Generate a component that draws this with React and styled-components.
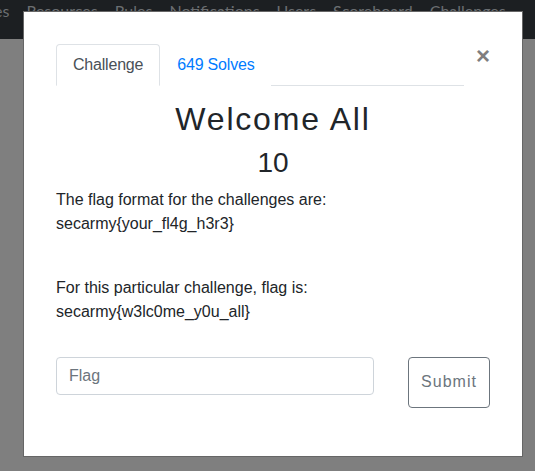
import React from 'react';
import styled, { createGlobalStyle } from 'styled-components';

const GlobalStyle = createGlobalStyle`
    html, body {
        margin: 0;
        padding: 0;
        background: #7f7f7f;
        font-family: "Liberation Sans", Arial, sans-serif;
        color: #212529;
    }
`;

const Page = styled.div`
    position: relative;
    width: 535px;
    height: 471px;
    overflow: hidden;
    background: #7f7f7f;
`;

const NavBar = styled.nav`
    height: 39px;
    background: #1c1f22;
    display: flex;
    gap: 17px;
    margin-left: -6px;
    overflow: hidden;
`;

const NavLink = styled.span`
    font-family: Lato, "Liberation Sans", sans-serif;
    font-size: 16px;
    line-height: 22px;
    color: #6b6e71;
    white-space: nowrap;
`;

const Overlay = styled.div`
    position: absolute;
    inset: 0;
    padding: 11px 0 0 23px;
`;

const Dialog = styled.div`
    box-sizing: border-box;
    width: 500px;
    height: 446px;
    background: #fff;
    border: 1px solid #666;
    padding: 32px;
`;

const Header = styled.div`
    display: flex;
    align-items: flex-start;
`;

const Tabs = styled.ul`
    flex: 1;
    display: flex;
    list-style: none;
    margin: 0;
    padding: 0;
    border-bottom: 1px solid #dee2e6;
`;

const Tab = styled.li`
    padding: 8px 16px;
    margin-bottom: -1px;
    font-size: 16px;
    line-height: 24px;
    letter-spacing: -0.2px;
    border: 1px solid ${p => (p.$active ? '#dee2e6' : 'transparent')};
    border-bottom-color: ${p => (p.$active ? '#fff' : 'transparent')};
    border-radius: 4px 4px 0 0;
    background: #fff;
    color: ${p => (p.$active ? '#495057' : '#007bff')};
`;

const Close = styled.button`
    margin: 0 0 0 12px;
    padding: 0;
    border: 0;
    background: none;
    font-family: "Liberation Sans", Arial, sans-serif;
    font-size: 24px;
    font-weight: 700;
    line-height: 24px;
    color: #7f7f7f;
    width: 14px;
`;

const Title = styled.h2`
    margin: 14px 0 8px;
    text-align: center;
    font-size: 32px;
    font-weight: 400;
    line-height: 1.2;
    letter-spacing: 1.8px;
`;

const Value = styled.h3`
    margin: 0 0 8px;
    text-align: center;
    font-size: 28px;
    font-weight: 400;
    line-height: 1.2;
`;

const Text = styled.p`
    margin: 0 0 ${p => p.$gap || 16}px;
    font-size: 16px;
    line-height: 24px;
`;

const SubmitRow = styled.form`
    display: flex;
    align-items: flex-start;
    margin-top: 33px;
`;

const FlagInput = styled.input`
    box-sizing: border-box;
    width: 318px;
    height: 38px;
    padding: 6px 12px;
    border: 1px solid #ced4da;
    border-radius: 4px;
    font-family: "Liberation Sans", Arial, sans-serif;
    font-size: 16px;
    color: #495057;
    outline: none;

    &::placeholder {
        color: #6c757d;
    }
`;

const SubmitButton = styled.button`
    box-sizing: border-box;
    margin-left: auto;
    width: 82px;
    height: 51px;
    padding: 0;
    border: 1px solid #6c757d;
    border-radius: 4px;
    background: #fff;
    color: #6c757d;
    font-family: "Liberation Sans", Arial, sans-serif;
    font-size: 16px;
    letter-spacing: 1px;
`;

const navItems = ['es', 'Resources', 'Rules', 'Notifications', 'Users', 'Scoreboard', 'Challenges'];

export default function App() {
    return (
        <Page>
            <GlobalStyle />
            <NavBar>
                {navItems.map(item => (
                    <NavLink key={item}>{item}</NavLink>
                ))}
            </NavBar>
            <Overlay>
                <Dialog>
                    <Header>
                        <Tabs>
                            <Tab $active>Challenge</Tab>
                            <Tab>649 Solves</Tab>
                        </Tabs>
                        <Close type="button">×</Close>
                    </Header>
                    <Title>Welcome All</Title>
                    <Value>10</Value>
                    <Text $gap={40}>
                        The flag format for the challenges are:
                        <br />
                        secarmy{'{'}your_fl4g_h3r3{'}'}
                    </Text>
                    <Text>
                        For this particular challenge, flag is:
                        <br />
                        secarmy{'{'}w3lc0me_y0u_all{'}'}
                    </Text>
                    <SubmitRow onSubmit={e => e.preventDefault()}>
                        <FlagInput placeholder="Flag" />
                        <SubmitButton type="submit">Submit</SubmitButton>
                    </SubmitRow>
                </Dialog>
            </Overlay>
        </Page>
    );
}
